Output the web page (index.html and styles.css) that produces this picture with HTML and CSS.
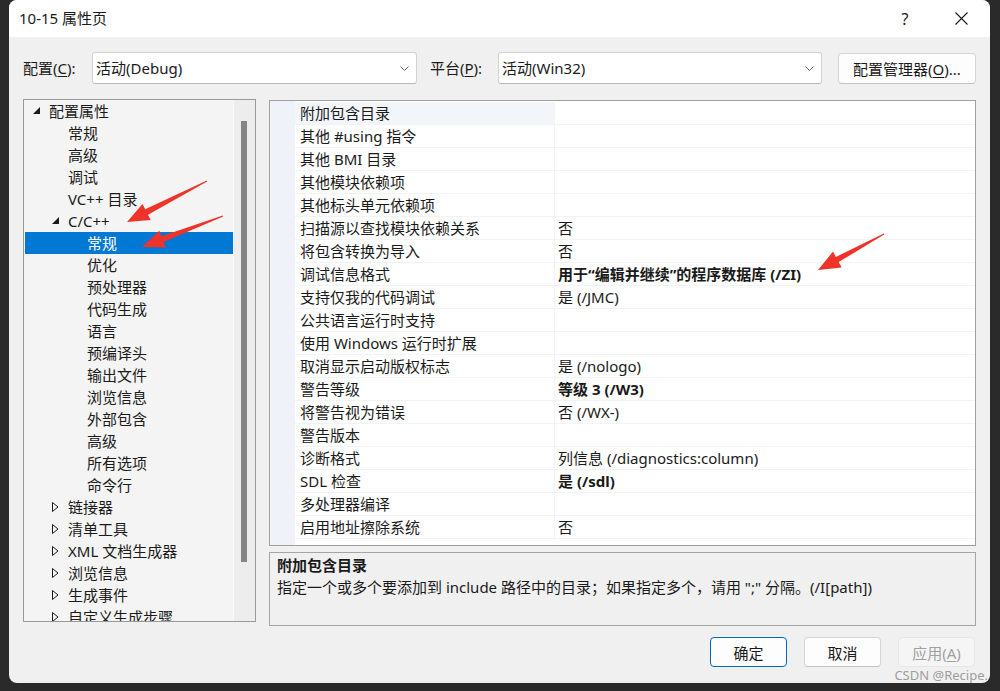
FILE: index.html
```html
<!DOCTYPE html>
<html lang="zh-CN">
<head>
    <meta charset="UTF-8">
    <title>10-15 属性页</title>
    <link rel="stylesheet" href="styles.css">
</head>
<body>
<div class="window">
    <div class="titlebar">
        <span class="title">10-15 属性页</span>
        <div class="caption-btns">
            <span class="cap-btn help">?</span>
            <span class="cap-btn close">
                <svg width="13" height="13" viewBox="0 0 13 13"><path d="M0.5 0.5L12.5 12.5M12.5 0.5L0.5 12.5" stroke="#1b1b1b" stroke-width="1.1" fill="none"/></svg>
            </span>
        </div>
    </div>

    <!-- 配置 / 平台 选择 -->
    <div class="config-row">
        <span class="field-label">配置(<u>C</u>):</span>
        <div class="combo combo-config">
            <span>活动(Debug)</span>
            <svg width="9" height="5" viewBox="0 0 9 5"><path d="M0.5 0.5L4.5 4.5L8.5 0.5" stroke="#606060" fill="none"/></svg>
        </div>
        <span class="field-label platform">平台(<u>P</u>):</span>
        <div class="combo combo-platform">
            <span>活动(Win32)</span>
            <svg width="9" height="5" viewBox="0 0 9 5"><path d="M0.5 0.5L4.5 4.5L8.5 0.5" stroke="#606060" fill="none"/></svg>
        </div>
        <button class="btn btn-manager">配置管理器(<u>O</u>)...</button>
    </div>

    <div class="main">
        <!-- 左侧树 -->
        <div class="tree">
            <ul class="tree-list">
                <li class="lvl0"><i class="glyph"><svg width="8" height="8" viewBox="0 0 8 8"><path d="M7 0V7H0Z" fill="#1b1b1b"/></svg></i>配置属性</li>
                <li class="lvl1"><i class="glyph"></i>常规</li>
                <li class="lvl1"><i class="glyph"></i>高级</li>
                <li class="lvl1"><i class="glyph"></i>调试</li>
                <li class="lvl1"><i class="glyph"></i>VC++ 目录</li>
                <li class="lvl1"><i class="glyph"><svg width="8" height="8" viewBox="0 0 8 8"><path d="M7 0V7H0Z" fill="#1b1b1b"/></svg></i>C/C++</li>
                <li class="lvl2 selected"><i class="glyph"></i>常规</li>
                <li class="lvl2"><i class="glyph"></i>优化</li>
                <li class="lvl2"><i class="glyph"></i>预处理器</li>
                <li class="lvl2"><i class="glyph"></i>代码生成</li>
                <li class="lvl2"><i class="glyph"></i>语言</li>
                <li class="lvl2"><i class="glyph"></i>预编译头</li>
                <li class="lvl2"><i class="glyph"></i>输出文件</li>
                <li class="lvl2"><i class="glyph"></i>浏览信息</li>
                <li class="lvl2"><i class="glyph"></i>外部包含</li>
                <li class="lvl2"><i class="glyph"></i>高级</li>
                <li class="lvl2"><i class="glyph"></i>所有选项</li>
                <li class="lvl2"><i class="glyph"></i>命令行</li>
                <li class="lvl1"><i class="glyph"><svg width="7" height="10" viewBox="0 0 7 10"><path d="M0.5 0.5L6 5L0.5 9.5Z" stroke="#1b1b1b" fill="none"/></svg></i>链接器</li>
                <li class="lvl1"><i class="glyph"><svg width="7" height="10" viewBox="0 0 7 10"><path d="M0.5 0.5L6 5L0.5 9.5Z" stroke="#1b1b1b" fill="none"/></svg></i>清单工具</li>
                <li class="lvl1"><i class="glyph"><svg width="7" height="10" viewBox="0 0 7 10"><path d="M0.5 0.5L6 5L0.5 9.5Z" stroke="#1b1b1b" fill="none"/></svg></i>XML 文档生成器</li>
                <li class="lvl1"><i class="glyph"><svg width="7" height="10" viewBox="0 0 7 10"><path d="M0.5 0.5L6 5L0.5 9.5Z" stroke="#1b1b1b" fill="none"/></svg></i>浏览信息</li>
                <li class="lvl1"><i class="glyph"><svg width="7" height="10" viewBox="0 0 7 10"><path d="M0.5 0.5L6 5L0.5 9.5Z" stroke="#1b1b1b" fill="none"/></svg></i>生成事件</li>
                <li class="lvl1"><i class="glyph"><svg width="7" height="10" viewBox="0 0 7 10"><path d="M0.5 0.5L6 5L0.5 9.5Z" stroke="#1b1b1b" fill="none"/></svg></i>自定义生成步骤</li>
            </ul>
            <div class="scrollbar"><div class="thumb"></div></div>
        </div>

        <!-- 右侧属性表 -->
        <div class="right-pane">
            <div class="grid">
                <div class="gutter"></div>
                <div class="grid-rows">
                    <div class="row selected"><span class="name">附加包含目录</span><span class="value"></span></div>
                    <div class="row"><span class="name">其他 #using 指令</span><span class="value"></span></div>
                    <div class="row"><span class="name">其他 BMI 目录</span><span class="value"></span></div>
                    <div class="row"><span class="name">其他模块依赖项</span><span class="value"></span></div>
                    <div class="row"><span class="name">其他标头单元依赖项</span><span class="value"></span></div>
                    <div class="row"><span class="name">扫描源以查找模块依赖关系</span><span class="value">否</span></div>
                    <div class="row"><span class="name">将包含转换为导入</span><span class="value">否</span></div>
                    <div class="row"><span class="name">调试信息格式</span><span class="value bold">用于“编辑并继续”的程序数据库 (/ZI)</span></div>
                    <div class="row"><span class="name">支持仅我的代码调试</span><span class="value">是 (/JMC)</span></div>
                    <div class="row"><span class="name">公共语言运行时支持</span><span class="value"></span></div>
                    <div class="row"><span class="name">使用 Windows 运行时扩展</span><span class="value"></span></div>
                    <div class="row"><span class="name">取消显示启动版权标志</span><span class="value">是 (/nologo)</span></div>
                    <div class="row"><span class="name">警告等级</span><span class="value bold">等级 3 (/W3)</span></div>
                    <div class="row"><span class="name">将警告视为错误</span><span class="value">否 (/WX-)</span></div>
                    <div class="row"><span class="name">警告版本</span><span class="value"></span></div>
                    <div class="row"><span class="name">诊断格式</span><span class="value">列信息 (/diagnostics:column)</span></div>
                    <div class="row"><span class="name">SDL 检查</span><span class="value bold">是 (/sdl)</span></div>
                    <div class="row"><span class="name">多处理器编译</span><span class="value"></span></div>
                    <div class="row"><span class="name">启用地址擦除系统</span><span class="value">否</span></div>
                </div>
            </div>
            <div class="desc">
                <div class="desc-title">附加包含目录</div>
                <div class="desc-text">指定一个或多个要添加到 include 路径中的目录；如果指定多个，请用 ";" 分隔。(/I[path])</div>
            </div>
        </div>
    </div>

    <div class="footer">
        <button class="btn btn-ok">确定</button>
        <button class="btn">取消</button>
        <button class="btn btn-disabled">应用(<u>A</u>)</button>
    </div>
</div>

<!-- 标注箭头 -->
<svg class="marks" width="1000" height="691" viewBox="0 0 1000 691">
    <polygon fill="#f0332a" points="206.8,180.6 145.2,209.3 142.5,204.0 127,222 150.7,220.0 148.0,214.7 207.2,181.4"/>
    <polygon fill="#f0332a" points="222.8,215.5 161.4,236.3 159.3,230.7 142,247 165.8,247.5 163.6,241.9 223.2,216.5"/>
    <polygon fill="#f0332a" points="883.8,233.6 835.9,256.9 833.0,251.6 818,270 841.6,267.4 838.7,262.1 884.2,234.4"/>
</svg>
<div class="watermark">CSDN @Recipe.</div>
</body>
</html>
```

FILE: styles.css
```css
* {
    margin: 0;
    padding: 0;
    box-sizing: border-box;
}

body {
    width: 1000px;
    height: 691px;
    background: #2a2a2a;
    font-family: "Noto Sans", "Noto Sans CJK SC", sans-serif;
    font-size: 15px;
    line-height: 1;
    color: #1a1a1a;
    position: relative;
    overflow: hidden;
}

u {
    text-decoration: underline;
    text-underline-offset: 2px;
}

.window {
    margin-left: 9px;
    width: 981px;
    height: 683px;
    background: #f0f0f0;
    border-radius: 8px;
    overflow: hidden;
    display: flex;
    flex-direction: column;
}

/* 标题栏 */
.titlebar {
    height: 37px;
    background: #fff;
    display: flex;
    align-items: center;
    justify-content: space-between;
    padding-left: 10px;
}

.caption-btns {
    display: flex;
    align-items: center;
    height: 100%;
    gap: 4px;
}

.cap-btn {
    height: 100%;
    display: flex;
    align-items: center;
    justify-content: center;
}

.help {
    width: 46px;
    font-size: 16px;
    color: #1b1b1b;
}

.close {
    width: 58px;
}

/* 配置行 */
.config-row {
    display: flex;
    align-items: center;
    height: 32px;
    margin-top: 15px;
    padding-left: 14px;
}

.field-label {
    width: 69px;
}

.field-label.platform {
    width: 68px;
    margin-left: 13px;
}

.combo {
    height: 32px;
    background: #fff;
    border: 1px solid #d2d2d2;
    border-bottom-color: #b8b8b8;
    border-radius: 3px;
    display: flex;
    align-items: center;
    justify-content: space-between;
    padding: 0 7px 0 3px;
}

.combo-config {
    width: 325px;
}

.combo-platform {
    width: 324px;
}

.btn {
    font-family: inherit;
    font-size: 15px;
    color: #1a1a1a;
    background: #fdfdfd;
    border: 1px solid #d4d4d4;
    border-bottom-color: #c2c2c2;
    border-radius: 4px;
    height: 30px;
    width: 77px;
}

.btn-manager {
    margin-left: 16px;
    width: 138px;
    height: 31px;
}

/* 主体 */
.main {
    display: flex;
    align-items: flex-start;
    gap: 13px;
    height: 526px;
    margin-top: 15px;
    padding: 0 14px;
}

.tree {
    width: 233px;
    height: 523px;
    border: 1px solid #999;
    background: #f4f4f4;
    display: flex;
    overflow: hidden;
}

.tree-list {
    list-style: none;
    width: 209px;
    padding-left: 1px;
}

.tree-list li {
    height: 22px;
    display: flex;
    align-items: center;
    white-space: nowrap;
}

.tree-list .glyph {
    width: 16px;
    display: flex;
    align-items: center;
}

.tree-list .lvl0 {
    padding-left: 8px;
}

.tree-list .lvl1 {
    padding-left: 27px;
}

.tree-list .lvl2 {
    padding-left: 46px;
}

.tree-list li.selected {
    background: #0078d4;
    color: #fff;
}

.scrollbar {
    width: 22px;
    height: 100%;
    background: #ededed;
    border-left: 1px solid #fafafa;
    padding: 21px 0 0 7px;
}

.thumb {
    width: 6px;
    height: 441px;
    background: #858585;
}

.right-pane {
    width: 707px;
    display: flex;
    flex-direction: column;
}

.grid {
    margin-top: 1px;
    height: 446px;
    border: 1px solid #a0a0a0;
    background: #fff;
    display: flex;
}

.gutter {
    width: 25px;
    background: #eff3f9;
}

.grid-rows {
    flex: 1;
    padding-top: 1px;
}

.row {
    display: flex;
    height: 23px;
    border-bottom: 1px solid #f1f3f6;
    align-items: stretch;
}

.row .name {
    width: 260px;
    padding-left: 5px;
    border-right: 1px solid #f1f3f6;
    display: flex;
    align-items: center;
    white-space: nowrap;
}

.row.selected .name {
    background: #f2f6fb;
}

.row .value {
    flex: 1;
    padding-left: 3px;
    display: flex;
    align-items: center;
    white-space: nowrap;
}

.value.bold {
    font-weight: 700;
}

.desc {
    margin-top: 6px;
    height: 74px;
    border: 1px solid #a5a5a5;
    background: #f0f0f0;
    padding: 1px 7px;
    line-height: 22px;
}

.desc-title {
    font-weight: 700;
}

/* 底部按钮 */
.footer {
    display: flex;
    justify-content: flex-end;
    gap: 17px;
    margin-top: 12px;
    padding-right: 15px;
}

.btn-ok {
    border: 1px solid #0067c0;
}

.btn-disabled {
    color: #a0a0a0;
    background: #f5f5f5;
    border-color: #e6e6e6;
}

.marks {
    position: absolute;
    left: 0;
    top: 0;
    pointer-events: none;
}

.watermark {
    position: absolute;
    right: 12px;
    bottom: 9px;
    font-size: 13px;
    line-height: 14px;
    color: rgba(140, 140, 140, 0.85);
}
```
